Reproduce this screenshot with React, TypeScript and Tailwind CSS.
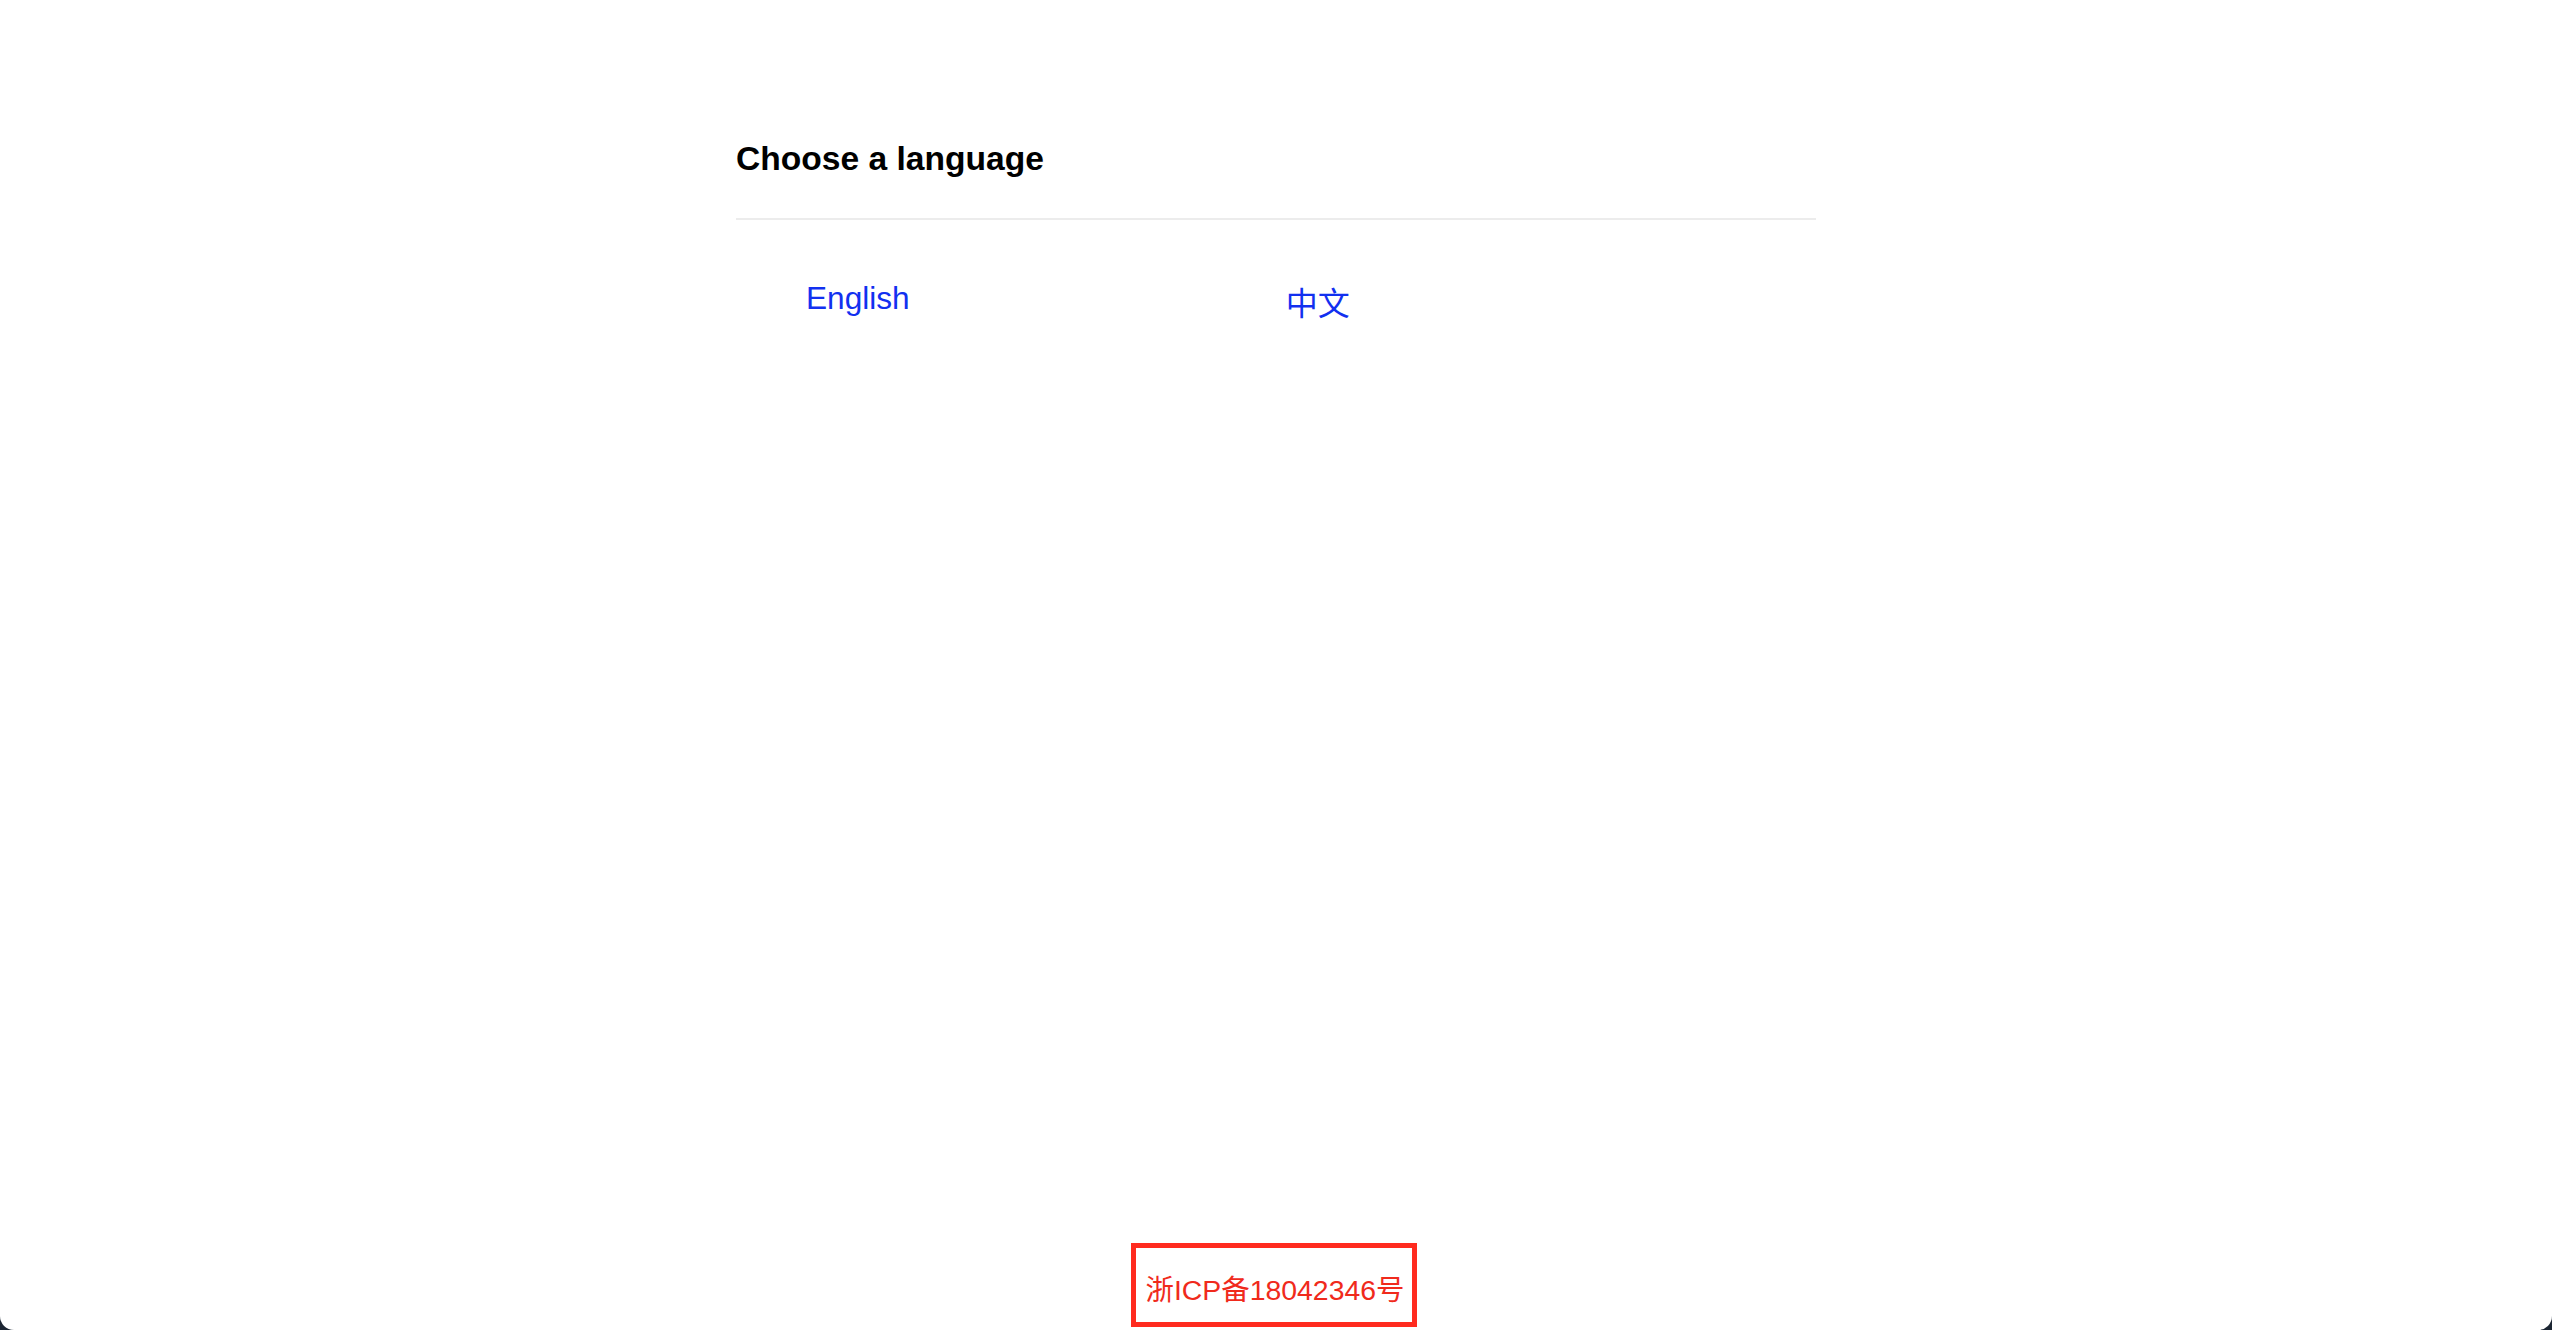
import React from "react";

export default function App() {
  return (
    <div className="h-screen w-full bg-[#1c2633]">
      <div
        className="h-full w-full bg-white rounded-bl-[14px] rounded-br-[14px] flex flex-col"
        style={{ fontFamily: '"Liberation Sans", "Noto Sans CJK SC", sans-serif' }}
      >
        <div className="mx-auto w-[1080px] pt-[139px]">
          <h1 className="text-[33.6px] leading-[40px] font-bold text-black pb-[39px] border-b-2 border-[#ececec]">
            Choose a language
          </h1>
          <div className="flex items-start pt-[58px]">
            <a className="ml-[70px] text-[31.6px] leading-[40px] text-[#1230f0] cursor-pointer">English</a>
            <a className="ml-[376px] mt-[6px] text-[32px] leading-[40px] text-[#1230f0] cursor-pointer">中文</a>
          </div>
        </div>
        <div className="mt-auto mb-[3px] flex justify-center pr-[4px]">
          <div className="h-[84px] w-[286px] border-[5px] border-[#ff2b1f] flex items-center justify-center pt-[10px] pl-[2px]">
            <span className="text-[28.4px] leading-[32px] text-[#f02a1c]">浙ICP备18042346号</span>
          </div>
        </div>
      </div>
    </div>
  );
}
